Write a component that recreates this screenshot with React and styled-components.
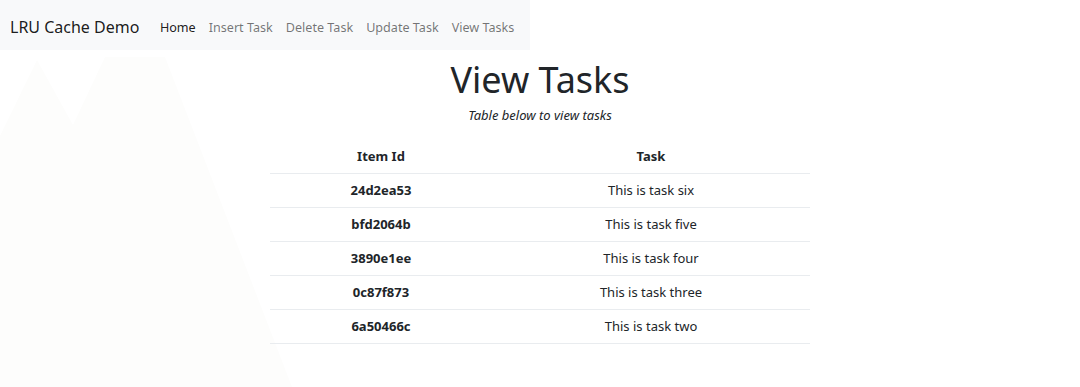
import React from 'react'
import styled, { createGlobalStyle } from 'styled-components'

const GlobalStyle = createGlobalStyle`
  body {
    margin: 0;
    background: #fff;
    font-family: "Noto Sans", "Open Sans", sans-serif;
    color: #212529;
  }
`;

const Page = styled.div`
  position: relative;
  width: 1080px;
  height: 387px;
  overflow: hidden;
`;

const Backdrop = styled.svg`
  position: absolute;
  left: 0;
  top: 0;
  z-index: 0;
`;

const NavBar = styled.nav`
  position: relative;
  z-index: 1;
  display: flex;
  align-items: center;
  box-sizing: border-box;
  width: 530px;
  height: 50px;
  padding: 4px 0 0 10px;
  background: #f8f9fa;
  white-space: nowrap;
`;

const Brand = styled.span`
  font-size: 16px;
  color: rgba(0, 0, 0, 0.9);
  margin-right: 14px;
`;

const NavLinks = styled.div`
  display: flex;
  align-items: center;
`;

const NavLink = styled.a`
  font-size: 12.6px;
  padding: 0 6.5px;
  color: ${p => (p.active ? 'rgba(0,0,0,0.9)' : 'rgba(0,0,0,0.55)')};
  text-decoration: none;
`;

const Main = styled.main`
  position: relative;
  z-index: 1;
  display: flex;
  flex-direction: column;
  align-items: center;
`;

const Title = styled.h1`
  margin: 8px 0 0;
  font-size: 36px;
  font-weight: 400;
  line-height: 44px;
  color: #212529;
`;

const Subtitle = styled.p`
  margin: 4px 0 17px;
  font-size: 13px;
  font-style: italic;
  line-height: 18px;
  color: #212529;
`;

const Table = styled.table`
  width: 540px;
  border-collapse: collapse;
  font-size: 13px;
  line-height: 21px;
`;

const HeadCell = styled.th`
  padding: 5px 8px 6px;
  font-weight: 700;
  text-align: center;
  border-bottom: 1px solid #e9ecef;
  width: ${p => p.w};
`;

const Cell = styled.td`
  padding: 6px 8px;
  text-align: center;
  font-weight: ${p => (p.bold ? 700 : 400)};
  border-bottom: 1px solid #e9ecef;
`;

const tasks = [
  ['24d2ea53', 'This is task six'],
  ['bfd2064b', 'This is task five'],
  ['3890e1ee', 'This is task four'],
  ['0c87f873', 'This is task three'],
  ['6a50466c', 'This is task two'],
];

const App = () => {
  return (
    <Page>
      <GlobalStyle />
      <Backdrop width="1080" height="387" viewBox="0 0 1080 387">
        <polygon
          points="0,136 37,60 73,125 105,57 165,57 292,387 0,387"
          fill="#fdfdfc"
        />
      </Backdrop>
      <NavBar>
        <Brand>LRU Cache Demo</Brand>
        <NavLinks>
          <NavLink active>Home</NavLink>
          <NavLink>Insert Task</NavLink>
          <NavLink>Delete Task</NavLink>
          <NavLink>Update Task</NavLink>
          <NavLink>View Tasks</NavLink>
        </NavLinks>
      </NavBar>
      <Main>
        <Title>View Tasks</Title>
        <Subtitle>Table below to view tasks</Subtitle>
        <Table>
          <thead>
            <tr>
              <HeadCell w="206px">Item Id</HeadCell>
              <HeadCell>Task</HeadCell>
            </tr>
          </thead>
          <tbody>
            {tasks.map(([id, task]) => (
              <tr key={id}>
                <Cell bold>{id}</Cell>
                <Cell>{task}</Cell>
              </tr>
            ))}
          </tbody>
        </Table>
      </Main>
    </Page>
  )
}

export default App
